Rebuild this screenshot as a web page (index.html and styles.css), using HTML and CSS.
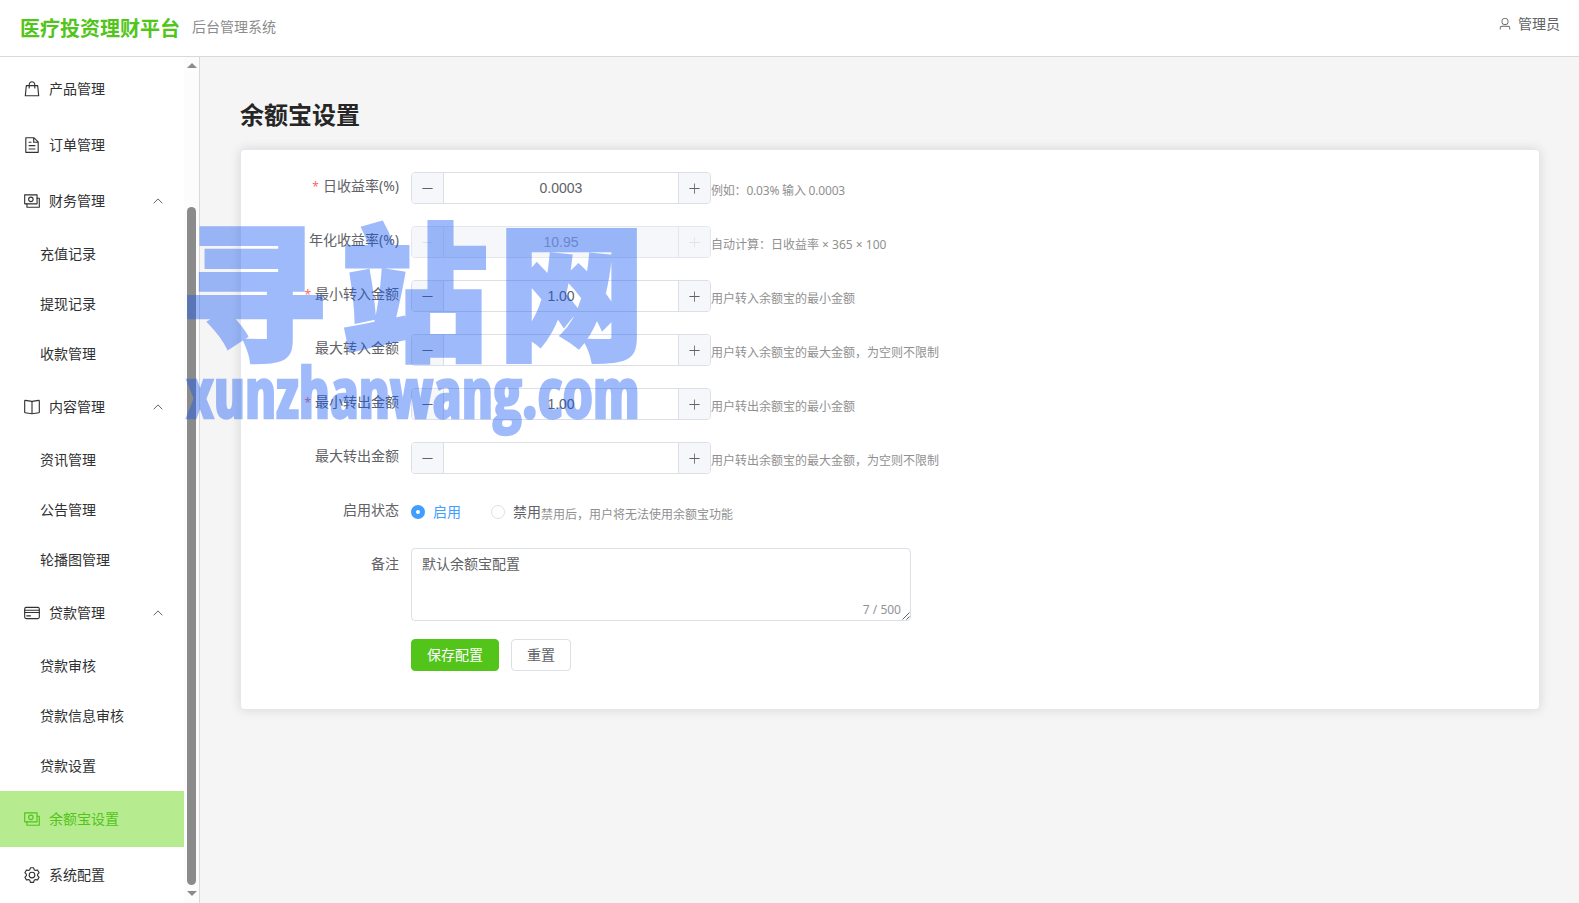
FILE: index.html
```html
<!DOCTYPE html>
<html lang="zh-CN">
<head>
<meta charset="utf-8">
<title>余额宝设置</title>
<link rel="stylesheet" href="styles.css">
</head>
<body>
<svg class="sprite" xmlns="http://www.w3.org/2000/svg">
  <symbol id="goods" viewBox="0 0 1024 1024"><path d="M320 288v-22.336C320 154.688 405.504 64 512 64s192 90.688 192 201.664v22.4h131.072a32 32 0 0 1 31.808 28.8l57.6 576a32 32 0 0 1-31.808 35.2H131.328a32 32 0 0 1-31.808-35.2l57.6-576a32 32 0 0 1 31.808-28.8H320zm64 0h256v-22.336C640 189.248 582.272 128 512 128c-70.272 0-128 61.248-128 137.664v22.4zm-64 64H217.92l-51.2 512h690.56l-51.264-512H704v96a32 32 0 1 1-64 0v-96H384v96a32 32 0 0 1-64 0v-96z"/></symbol>
  <symbol id="document" viewBox="0 0 1024 1024"><path d="M832 384H576V128H192v768h640V384zm-26.496-64L640 154.496V320h165.504zM160 64h480l256 256v608a32 32 0 0 1-32 32H160a32 32 0 0 1-32-32V96a32 32 0 0 1 32-32zm160 448h384v64H320v-64zm0-192h160v64H320v-64zm0 384h384v64H320v-64z"/></symbol>
  <symbol id="money" viewBox="0 0 1024 1024"><path d="M256 640v192h640V384H768v-64h150.976c14.272 0 19.456 1.472 24.64 4.288a29.056 29.056 0 0 1 12.16 12.096c2.752 5.184 4.224 10.368 4.224 24.64v493.952c0 14.272-1.472 19.456-4.288 24.64a29.056 29.056 0 0 1-12.096 12.16c-5.184 2.752-10.368 4.224-24.64 4.224H233.024c-14.272 0-19.456-1.472-24.64-4.288a29.056 29.056 0 0 1-12.16-12.096c-2.688-5.184-4.224-10.368-4.224-24.576V640h64z"/><path d="M768 192H128v448h640V192zm64-22.976v493.952c0 14.272-1.472 19.456-4.288 24.64a29.056 29.056 0 0 1-12.096 12.16c-5.184 2.752-10.368 4.224-24.64 4.224H105.024c-14.272 0-19.456-1.472-24.64-4.288a29.056 29.056 0 0 1-12.16-12.096C65.536 682.432 64 677.248 64 663.04V169.024c0-14.272 1.472-19.456 4.288-24.64a29.056 29.056 0 0 1 12.096-12.16C85.568 129.536 90.752 128 104.96 128h685.952c14.272 0 19.456 1.472 24.64 4.288a29.056 29.056 0 0 1 12.16 12.096c2.752 5.184 4.224 10.368 4.224 24.64z"/><path d="M448 576a160 160 0 1 1 0-320 160 160 0 0 1 0 320zm0-64a96 96 0 1 0 0-192 96 96 0 0 0 0 192z"/></symbol>
  <symbol id="reading" viewBox="0 0 1024 1024"><path d="m512 863.36 384-54.848v-638.72L525.568 222.72a96 96 0 0 1-27.136 0L128 169.792v638.72l384 54.848zM137.024 106.432l370.432 52.928a32 32 0 0 0 9.088 0l370.432-52.928A64 64 0 0 1 960 169.792v638.72a64 64 0 0 1-54.976 63.36l-388.48 55.488a32 32 0 0 1-9.088 0l-388.48-55.488A64 64 0 0 1 64 808.512v-638.72a64 64 0 0 1 73.024-63.36z"/><path d="M480 192h64v704h-64z"/></symbol>
  <symbol id="card" viewBox="0 0 1024 1024"><rect x="96" y="192" width="832" height="640" rx="90" fill="none" stroke="currentColor" stroke-width="64"/><path d="M64 320h896v64H64zM64 448h896v64H64zM192 640h256v64H192z"/></symbol>
  <symbol id="setting" viewBox="0 0 1024 1024"><path d="M600.704 64a32 32 0 0 1 30.464 22.208l35.2 109.376c14.784 7.232 28.928 15.36 42.432 24.512l112.384-24.192a32 32 0 0 1 34.432 15.36L944.32 364.8a32 32 0 0 1-4.032 37.504l-77.12 85.12a357.12 357.12 0 0 1 0 49.024l77.12 85.248a32 32 0 0 1 4.032 37.504l-88.704 153.6a32 32 0 0 1-34.432 15.296L708.8 803.904c-13.44 9.088-27.648 17.28-42.368 24.512l-35.264 109.376A32 32 0 0 1 600.704 960H423.296a32 32 0 0 1-30.464-22.208L357.696 828.48a351.616 351.616 0 0 1-42.56-24.64l-112.32 24.256a32 32 0 0 1-34.432-15.36L79.68 659.2a32 32 0 0 1 4.032-37.504l77.12-85.248a357.12 357.12 0 0 1 0-48.896l-77.12-85.248A32 32 0 0 1 79.68 364.8l88.704-153.6a32 32 0 0 1 34.432-15.296l112.32 24.256c13.568-9.152 27.776-17.408 42.56-24.64l35.2-109.312A32 32 0 0 1 423.232 64H600.64zm-23.424 64H446.72l-36.352 113.088-24.512 11.968a294.113 294.113 0 0 0-34.816 20.096l-22.656 15.36-116.224-25.088-65.28 113.152 79.68 88.192-1.92 27.136a293.12 293.12 0 0 0 0 40.192l1.92 27.136-79.808 88.192 65.344 113.152 116.224-25.024 22.656 15.296a294.113 294.113 0 0 0 34.816 20.096l24.512 11.968L446.72 896h130.688l36.48-113.152 24.448-11.904a288.282 288.282 0 0 0 34.752-20.096l22.592-15.296 116.288 25.024 65.28-113.152-79.744-88.192 1.92-27.136a293.12 293.12 0 0 0 0-40.256l-1.92-27.136 79.808-88.128-65.344-113.152-116.288 24.96-22.592-15.232a287.616 287.616 0 0 0-34.752-20.096l-24.448-11.904L577.344 128zM512 320a192 192 0 1 1 0 384 192 192 0 0 1 0-384zm0 64a128 128 0 1 0 0 256 128 128 0 0 0 0-256z"/></symbol>
  <symbol id="user" viewBox="0 0 1024 1024"><path d="M512 512a192 192 0 1 0 0-384 192 192 0 0 0 0 384zm0 64a256 256 0 1 1 0-512 256 256 0 0 1 0 512zm320 320v-96a96 96 0 0 0-96-96H288a96 96 0 0 0-96 96v96a32 32 0 1 1-64 0v-96a160 160 0 0 1 160-160h448a160 160 0 0 1 160 160v96a32 32 0 1 1-64 0z"/></symbol>
  <symbol id="up" viewBox="0 0 1024 1024"><path d="M170 682 512 332l342 350" fill="none" stroke="currentColor" stroke-width="64" stroke-linecap="round"/></symbol>
  <symbol id="minus" viewBox="0 0 1024 1024"><path d="M128 544h768a32 32 0 1 0 0-64H128a32 32 0 0 0 0 64z"/></symbol>
  <symbol id="plus" viewBox="0 0 1024 1024"><path d="M480 480V128a32 32 0 0 1 64 0v352h352a32 32 0 1 1 0 64H544v352a32 32 0 1 1-64 0V544H128a32 32 0 0 1 0-64h352z"/></symbol>
</svg>

<header class="header">
  <div class="brand"><span class="brand-name">医疗投资理财平台</span><span class="brand-sub">后台管理系统</span></div>
  <div class="account"><svg class="account-icon"><use href="#user"/></svg><span class="account-name">管理员</span></div>
</header>

<div class="layout">
  <aside class="sidebar">
    <nav class="menu">
      <div class="item"><svg class="icon"><use href="#goods"/></svg><span>产品管理</span></div>
      <div class="item"><svg class="icon"><use href="#document"/></svg><span>订单管理</span></div>
      <div class="item"><svg class="icon"><use href="#money"/></svg><span>财务管理</span><svg class="arrow"><use href="#up"/></svg></div>
      <div class="sub">充值记录</div>
      <div class="sub">提现记录</div>
      <div class="sub">收款管理</div>
      <div class="item"><svg class="icon"><use href="#reading"/></svg><span>内容管理</span><svg class="arrow"><use href="#up"/></svg></div>
      <div class="sub">资讯管理</div>
      <div class="sub">公告管理</div>
      <div class="sub">轮播图管理</div>
      <div class="item"><svg class="icon"><use href="#card"/></svg><span>贷款管理</span><svg class="arrow"><use href="#up"/></svg></div>
      <div class="sub">贷款审核</div>
      <div class="sub">贷款信息审核</div>
      <div class="sub">贷款设置</div>
      <div class="item active"><svg class="icon"><use href="#money"/></svg><span>余额宝设置</span></div>
      <div class="item"><svg class="icon"><use href="#setting"/></svg><span>系统配置</span></div>
    </nav>
    <div class="scrollbar"><i class="tri-up"></i><i class="thumb"></i><i class="tri-down"></i></div>
  </aside>

  <main class="main">
    <h2 class="title">余额宝设置</h2>
    <section class="card">
      <div class="row">
        <label class="label required">日收益率(%)</label>
        <div class="number"><span class="step"><svg><use href="#minus"/></svg></span><span class="value">0.0003</span><span class="step"><svg><use href="#plus"/></svg></span></div>
        <span class="hint hint-tight">例如：0.03% 输入 0.0003</span>
      </div>
      <div class="row">
        <label class="label">年化收益率(%)</label>
        <div class="number disabled"><span class="step"><svg><use href="#minus"/></svg></span><span class="value">10.95</span><span class="step"><svg><use href="#plus"/></svg></span></div>
        <span class="hint">自动计算：日收益率 × 365 × 100</span>
      </div>
      <div class="row">
        <label class="label required">最小转入金额</label>
        <div class="number"><span class="step"><svg><use href="#minus"/></svg></span><span class="value">1.00</span><span class="step"><svg><use href="#plus"/></svg></span></div>
        <span class="hint">用户转入余额宝的最小金额</span>
      </div>
      <div class="row">
        <label class="label">最大转入金额</label>
        <div class="number"><span class="step"><svg><use href="#minus"/></svg></span><span class="value"></span><span class="step"><svg><use href="#plus"/></svg></span></div>
        <span class="hint">用户转入余额宝的最大金额，为空则不限制</span>
      </div>
      <div class="row">
        <label class="label required">最小转出金额</label>
        <div class="number"><span class="step"><svg><use href="#minus"/></svg></span><span class="value">1.00</span><span class="step"><svg><use href="#plus"/></svg></span></div>
        <span class="hint">用户转出余额宝的最小金额</span>
      </div>
      <div class="row">
        <label class="label">最大转出金额</label>
        <div class="number"><span class="step"><svg><use href="#minus"/></svg></span><span class="value"></span><span class="step"><svg><use href="#plus"/></svg></span></div>
        <span class="hint">用户转出余额宝的最大金额，为空则不限制</span>
      </div>
      <div class="row">
        <label class="label">启用状态</label>
        <div class="radios"><span class="radio checked"><i class="dot"></i><span>启用</span></span><span class="radio"><i class="dot"></i><span>禁用</span></span></div>
        <span class="hint">禁用后，用户将无法使用余额宝功能</span>
      </div>
      <div class="row row-note">
        <label class="label">备注</label>
        <div class="textarea"><span>默认余额宝配置</span><span class="count">7 / 500</span>
          <svg class="grip" viewBox="0 0 8 8"><path d="M0.5 7.5l7-7M4.5 7.5l3-3"/></svg></div>
      </div>
      <div class="actions"><button class="btn primary">保存配置</button><button class="btn">重置</button></div>
    </section>
  </main>
</div>

<svg class="watermark" width="480" height="240" viewBox="180 210 480 240">
  <text class="wm-cjk" x="179.500 341 498" y="348">寻站网</text>
  <text class="wm-latin" x="186.500" y="418" textLength="453" lengthAdjust="spacingAndGlyphs">xunzhanwang.com</text>
</svg>
</body>
</html>
```
FILE: styles.css
```css
* { box-sizing: border-box; }
body {
  margin: 0;
  height: 903px;
  overflow: hidden;
  display: flex;
  flex-direction: column;
  font-family: "Noto Sans", "Noto Sans CJK SC", sans-serif;
  font-size: 14px;
  color: #303133;
  background: #fff;
}
svg { fill: currentColor; flex: none; }
.sprite { position: absolute; width: 0; height: 0; }

.header {
  height: 57px;
  flex: none;
  display: flex;
  justify-content: space-between;
  padding: 0 19px 0 20px;
  border-bottom: 1px solid #d9d9d9;
}
.brand { display: flex; align-items: center; gap: 12px; }
.brand-name { font-size: 20px; font-weight: 700; color: #52c41a; line-height: 28px; padding-top: 1px; }
.brand-sub { color: #8c8c8c; line-height: 20px; padding-bottom: 2px; }
.account { display: flex; align-items: center; height: 48px; gap: 6px; color: #606266; }
.account-icon { width: 14px; height: 14px; }
.account-name { padding-bottom: 2px; }

.layout { flex: 1; display: flex; min-height: 0; }
.sidebar { width: 200px; flex: none; display: flex; border-right: 1px solid #d9d9d9; }
.menu { width: 184px; padding-top: 4px; }
.item { height: 56px; display: flex; align-items: center; padding: 0 20px; }
.item span { padding-bottom: 2px; }
.item.active { background: #b7eb8f; color: #52c41a; }
.icon { width: 18px; height: 18px; margin: 0 8px 0 3px; }
.arrow { width: 12px; height: 12px; margin-left: auto; }
.sub { height: 50px; line-height: 50px; padding-left: 40px; }
.scrollbar {
  width: 15px;
  background: #fcfcfc;
  display: flex;
  flex-direction: column;
  align-items: center;
  padding: 6px 0;
}
.tri-up, .tri-down { border: 5px solid transparent; }
.tri-up { border-top: 0; border-bottom: 5px solid #8b8b8b; }
.tri-down { border-bottom: 0; border-top: 5px solid #8b8b8b; margin-top: 6px; }
.thumb { width: 9px; height: 678px; margin-top: 139px; border-radius: 5px; background: #8b8b8b; }

.main { flex: 1; background: #f5f5f5; padding: 40px 39px 0 40px; }
.title { margin: 0 0 16px; font-size: 24px; line-height: 36px; font-weight: 700; color: #262626; }
.card {
  height: 561px;
  background: #fff;
  border: 1px solid #e4e7ed;
  border-radius: 4px;
  padding: 21px 20px 20px;
  box-shadow: 0 0 12px rgba(0, 0, 0, 0.12);
}
.row { display: flex; height: 54px; color: #606266; }
.label { width: 150px; padding-right: 12px; text-align: right; line-height: 30px; }
.required::before { content: "*"; font-size: 12px; color: #f56c6c; margin-right: 4px; }
.number {
  width: 300px;
  height: 32px;
  margin-top: 1px;
  display: flex;
  border: 1px solid #dcdfe6;
  border-radius: 4px;
}
.step { width: 32px; display: flex; align-items: center; justify-content: center; background: #f5f7fa; }
.step:first-child { border-right: 1px solid #dcdfe6; border-radius: 3px 0 0 3px; }
.step:last-child { border-left: 1px solid #dcdfe6; border-radius: 0 3px 3px 0; }
.step svg { width: 13px; height: 13px; }
.value { flex: 1; text-align: center; line-height: 30px; font-family: "Liberation Sans", Arial, sans-serif; }
.disabled { background: #f5f7fa; border-color: #e4e7ed; color: #a8abb2; }
.disabled .step { border-color: #e4e7ed; color: #e0e2e8; }
.hint { font-size: 12px; line-height: 40px; color: #909090; white-space: nowrap; }
.hint-tight { letter-spacing: -0.2px; }
.radios { display: flex; gap: 30px; height: 34px; }
.radio { display: flex; align-items: center; gap: 8px; }
.radio span { padding-bottom: 2px; }
.dot { width: 14px; height: 14px; border-radius: 50%; border: 1px solid #dcdfe6; }
.checked { color: #409eff; }
.checked .dot { border: 5px solid #409eff; }
.row-note { height: 90px; }
.textarea {
  position: relative;
  width: 500px;
  height: 73px;
  margin-top: -1px;
  padding: 4px 10px;
  line-height: 21px;
  border: 1px solid #dcdfe6;
  border-radius: 4px;
}
.count { position: absolute; right: 9px; bottom: 3px; font-size: 12px; line-height: 14px; color: #909399; }
.grip { position: absolute; right: 0; bottom: 0; width: 8px; height: 8px; fill: none; stroke: #555; stroke-width: 0.9; }
.actions { display: flex; gap: 12px; padding-left: 150px; }
.btn {
  height: 32px;
  padding: 0 15px;
  border: 1px solid #dcdfe6;
  border-radius: 4px;
  background: #fff;
  color: #606266;
  font: inherit;
  line-height: 28px;
}
.primary { background: #52c41a; border-color: #52c41a; color: #fff; }

.watermark { position: absolute; left: 180px; top: 210px; overflow: visible; opacity: 0.4; fill: #0f55f5; pointer-events: none; }
.wm-cjk { font: 900 147px "Noto Sans CJK SC", sans-serif; stroke: #0f55f5; stroke-width: 4px; }
.wm-latin { font: 700 69px "Open Sans", sans-serif; font-stretch: condensed; stroke: #0f55f5; stroke-width: 2.5px; }
```
